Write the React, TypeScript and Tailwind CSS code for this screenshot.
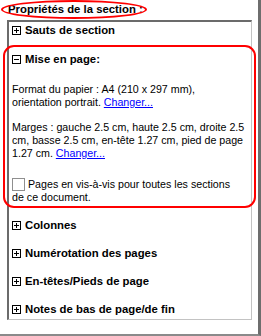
import React from "react";

function PlusMinus({ minus = false }: { minus?: boolean }) {
  return (
    <svg width="9" height="9" viewBox="0 0 9 9" className="shrink-0" shapeRendering="crispEdges">
      <rect x="0.5" y="0.5" width="8" height="8" fill="white" stroke="black" strokeWidth="1" />
      <line x1="2" y1="4.5" x2="7" y2="4.5" stroke="black" strokeWidth="1" />
      {!minus && <line x1="4.5" y1="2" x2="4.5" y2="7" stroke="black" strokeWidth="1" />}
    </svg>
  );
}

function Header({ label, minus = false, className = "" }: { label: string; minus?: boolean; className?: string }) {
  return (
    <div className={"flex items-center gap-[4px] h-[14px] text-[11.33px] leading-[14px] font-bold text-black whitespace-nowrap " + className}>
      <PlusMinus minus={minus} />
      <span>{label}</span>
    </div>
  );
}

export default function App() {
  return (
    <div
      className="relative w-[261px] h-[336px] bg-white border-r-[3px] border-b-2 border-r-[#6e6e6e] border-b-[#8a8a8a] overflow-hidden"
      style={{ fontFamily: '"Liberation Sans", Arial, sans-serif' }}
    >
      <div className="h-[20px] pl-[8px] pt-[2px] text-[11.33px] leading-[14px] font-bold text-black whitespace-nowrap">
        Propriétés de la section :
      </div>
      <div className="ml-[7px] w-[245px] h-[300px] border-t-2 border-l-2 border-t-[#6b6b6b] border-l-[#6b6b6b] border-r border-b border-r-[#c3c3c3] border-b-[#c3c3c3] pl-[3px] pt-[1px]">
        <Header label="Sauts de section" />
        <Header label="Mise en page:" minus className="mt-[15px]" />
        <div className="mt-[17px] text-[10.67px] leading-[13px] text-black whitespace-nowrap">
          <div>Format du papier : A4 (210 x 297 mm),</div>
          <div>
            orientation portrait. <span className="text-[#0000ff] underline">Changer...</span>
          </div>
        </div>
        <div className="mt-[12px] text-[10.67px] leading-[13px] text-black whitespace-nowrap">
          <div>Marges : gauche 2.5 cm, haute 2.5 cm, droite 2.5</div>
          <div>cm, basse 2.5 cm, en-tête 1.27 cm, pied de page</div>
          <div>
            1.27 cm. <span className="text-[#0000ff] underline">Changer...</span>
          </div>
        </div>
        <div className="mt-[18px] text-[10.67px] leading-[13px] text-black whitespace-nowrap">
          <div className="flex items-center">
            <span className="inline-block w-[13px] h-[13px] border border-[#8f8f8f] bg-white mr-[3px] shrink-0" />
            <span>Pages en vis-à-vis pour toutes les sections</span>
          </div>
          <div>de ce document.</div>
        </div>
        <Header label="Colonnes" className="mt-[14px]" />
        <Header label="Numérotation des pages" className="mt-[14px]" />
        <Header label="En-têtes/Pieds de page" className="mt-[14px]" />
        <Header label="Notes de bas de page/de fin" className="mt-[14px]" />
      </div>
      <div className="absolute left-[1px] top-0 w-[146px] h-[19px] rounded-[50%] border-2 border-[#ff0000] pointer-events-none" />
      <div className="absolute left-[3px] top-[45px] w-[253px] h-[163px] rounded-[11px] border-2 border-[#ff0000] pointer-events-none" />
    </div>
  );
}
